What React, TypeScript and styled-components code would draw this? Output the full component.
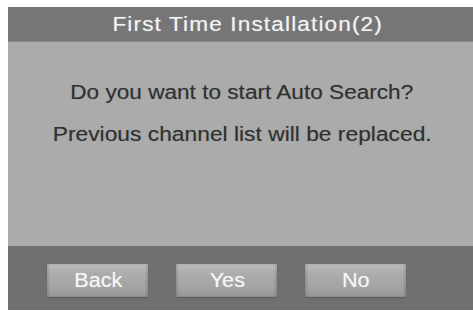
import React from "react";
import styled, { createGlobalStyle } from "styled-components";

const Global = createGlobalStyle`
  html, body { margin: 0; padding: 0; background: #ffffff; }
  body { font-family: "Liberation Sans", Arial, sans-serif; }
`;

const Screen = styled.div`
  width: 473px;
  height: 312px;
  padding: 7px 0 2px 8px;
  box-sizing: border-box;
  background: #ffffff;
`;

const Panel = styled.div`
  display: flex;
  flex-direction: column;
  height: 303px;
  background: #ababab;
`;

const Header = styled.div`
  height: 35px;
  display: flex;
  align-items: center;
  justify-content: center;
  background: #767676;
  border-bottom: 1px solid #858585;
  box-sizing: border-box;
  padding-left: 14px;
`;

const Wide = styled.span<{ $stretch: number }>`
  display: inline-block;
  transform: scaleX(${(p) => p.$stretch});
  transform-origin: center;
`;

const Title = styled(Wide)`
  font-size: 20px;
  letter-spacing: 1px;
  line-height: 35px;
  color: #f2f2f2;
  text-shadow: 0 0 1px rgba(255, 255, 255, 0.5);
`;

const Content = styled.div`
  flex: 1;
  display: flex;
  flex-direction: column;
  align-items: center;
  padding-top: 37px;
  gap: 15px;
  padding-left: 3px;
`;

const Message = styled(Wide)`
  font-size: 20px;
  line-height: 27px;
  color: #303030;
  text-shadow: 0 0 1px rgba(0, 0, 0, 0.25);
`;

const Footer = styled.div`
  height: 64px;
  display: flex;
  align-items: flex-start;
  gap: 28px;
  padding: 18px 0 0 39px;
  box-sizing: border-box;
  background: #707070;
`;

const Button = styled.div`
  width: 101px;
  height: 33px;
  display: flex;
  align-items: center;
  justify-content: center;
  box-sizing: border-box;
  padding-left: 1px;
  background: linear-gradient(
    to bottom,
    #bdbdbd 0%,
    #acacac 30%,
    #a4a4a4 70%,
    #969696 100%
  );
  box-shadow: inset 2px 0 2px rgba(0, 0, 0, 0.12),
    inset -2px 0 2px rgba(0, 0, 0, 0.12), 0 1px 1px rgba(0, 0, 0, 0.15);
`;

const Label = styled(Wide)`
  font-size: 20px;
  line-height: 33px;
  color: #f6f6f6;
  text-shadow: 0 0 1px rgba(255, 255, 255, 0.5);
`;

export default function App() {
  return (
    <>
      <Global />
      <Screen>
        <Panel>
          <Header>
            <Title $stretch={1.13}>First Time Installation(2)</Title>
          </Header>
          <Content>
            <Message $stretch={1.13}>Do you want to start Auto Search?</Message>
            <Message $stretch={1.14}>
              Previous channel list will be replaced.
            </Message>
          </Content>
          <Footer>
            {["Back", "Yes", "No"].map((t) => (
              <Button key={t}>
                <Label $stretch={1.08}>{t}</Label>
              </Button>
            ))}
          </Footer>
        </Panel>
      </Screen>
    </>
  );
}
